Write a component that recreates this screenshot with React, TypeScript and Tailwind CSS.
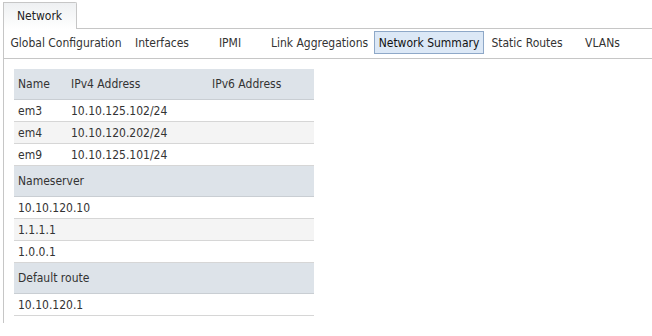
import React from "react";

const font = { fontFamily: '"DejaVu Sans Condensed", "DejaVu Sans", sans-serif' };

type Tab = { label: string; w: string; ml: string; active?: boolean };

const tabs: Tab[] = [
  { label: "Global Configuration", w: "w-[120px]", ml: "ml-0" },
  { label: "Interfaces", w: "w-[64px]", ml: "ml-[4px]" },
  { label: "IPMI", w: "w-[64px]", ml: "ml-[4px]" },
  { label: "Link Aggregations", w: "w-[107px]", ml: "ml-[4px]" },
  { label: "Network Summary", w: "w-[110px]", ml: "ml-[1px]", active: true },
  { label: "Static Routes", w: "w-[80px]", ml: "ml-[3px]" },
  { label: "VLANs", w: "w-[63px]", ml: "ml-[4px]" },
];

function HeaderRow({ children }: { children: React.ReactNode }) {
  return (
    <div className="flex h-[31px] items-center border-b border-[#c9ced3] bg-[#dde3e9]">
      {children}
    </div>
  );
}

function Row({ alt, children }: { alt?: boolean; children: React.ReactNode }) {
  return (
    <div className={`flex h-[22px] items-center border-b border-[#d6d6d6] ${alt ? "bg-[#f4f4f4]" : "bg-white"}`}>
      {children}
    </div>
  );
}

export default function App() {
  const ifaces = [
    ["em3", "10.10.125.102/24"],
    ["em4", "10.10.120.202/24"],
    ["em9", "10.10.125.101/24"],
  ];
  const ns = ["10.10.120.10", "1.1.1.1", "1.0.0.1"];
  return (
    <div className="h-[336px] w-[652px] bg-white text-[12px] text-[#333]" style={font}>
      <div className="pl-[3px] pt-[2px]">
        <div className="flex">
          <div className="flex h-[27px] w-[74px] items-center rounded-tr-[2px] border-l border-r border-t border-[#c6c6c6] bg-gradient-to-b from-[#eef0f2] to-white pl-[13px] text-[#222]">
            Network
          </div>
          <div className="flex-1 border-b border-[#c6c6c6]" />
        </div>
        <div className="h-[294px] border-l border-[#c6c6c6]">
          <div className="flex h-[30px] items-start border-b border-[#c6c6c6] pl-[2px] pt-[2px]">
            {tabs.map((t) => (
              <div
                key={t.label}
                className={`${t.w} ${t.ml} flex h-[23px] shrink-0 items-center justify-center whitespace-nowrap border ${
                  t.active ? "border-[#8ea8c8] bg-[#dce8f6] text-[#111]" : "border-transparent"
                }`}
              >
                {t.label}
              </div>
            ))}
          </div>
          <div className="ml-[10px] mt-[10px] w-[300px]">
            <HeaderRow>
              <div className="w-[53px] pl-[4px]">Name</div>
              <div className="w-[141px] pl-[4px]">IPv4 Address</div>
              <div className="pl-[4px]">IPv6 Address</div>
            </HeaderRow>
            {ifaces.map(([n, ip], i) => (
              <Row key={n} alt={i % 2 === 1}>
                <div className="w-[53px] pl-[4px]">{n}</div>
                <div className="w-[141px] pl-[4px]">{ip}</div>
                <div className="pl-[4px]" />
              </Row>
            ))}
            <HeaderRow>
              <div className="pl-[4px]">Nameserver</div>
            </HeaderRow>
            {ns.map((n, i) => (
              <Row key={n} alt={i % 2 === 1}>
                <div className="pl-[4px]">{n}</div>
              </Row>
            ))}
            <HeaderRow>
              <div className="pl-[4px]">Default route</div>
            </HeaderRow>
            <Row>
              <div className="pl-[4px]">10.10.120.1</div>
            </Row>
          </div>
        </div>
      </div>
    </div>
  );
}
